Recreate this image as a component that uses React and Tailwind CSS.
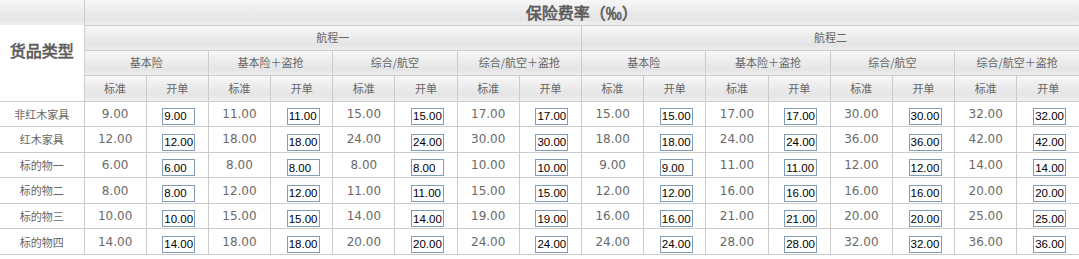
import React from "react";

const groups = ["基本险", "基本险＋盗抢", "综合/航空", "综合/航空＋盗抢"];

const rows = [
  { name: "非红木家具", values: [9, 11, 15, 17, 15, 17, 30, 32] },
  { name: "红木家具", values: [12, 18, 24, 30, 18, 24, 36, 42] },
  { name: "标的物一", values: [6, 8, 8, 10, 9, 11, 12, 14] },
  { name: "标的物二", values: [8, 12, 11, 15, 12, 16, 16, 20] },
  { name: "标的物三", values: [10, 15, 14, 19, 16, 21, 20, 25] },
  { name: "标的物四", values: [14, 18, 20, 24, 24, 28, 32, 36] },
];

const headCell =
  "border-b border-r border-[#cccccc] bg-white bg-[linear-gradient(#f7f7f7,#e9e9e9_55%,#e5e5e5_75%,#efefef)] bg-no-repeat bg-[length:100%_25px] font-normal text-[11px] text-[#666666] h-[25px] p-0";

const boldText =
  "text-[16px] font-bold text-[#555555] [-webkit-text-stroke:0.6px_#555555]";

const cjk = { fontFamily: '"Noto Sans CJK SC", "DejaVu Sans", sans-serif' };

const App = () => {
  return (
    <div className="w-[1079px] bg-white" style={cjk}>
      <table className="w-full table-fixed border-collapse">
        <colgroup>
          <col className="w-[84px]" />
          {Array.from({ length: 16 }).map((_, i) => (
            <col key={i} />
          ))}
        </colgroup>
        <thead>
          <tr>
            <th rowSpan={4} className={`${headCell} ${boldText}`}>
              货品类型
            </th>
            <th
              colSpan={16}
              className={`${headCell} ${boldText} border-r-0 h-[24px]`}
            >
              保险费率（‰）
            </th>
          </tr>
          <tr>
            <th colSpan={8} className={headCell}>
              航程一
            </th>
            <th colSpan={8} className={`${headCell} border-r-0`}>
              航程二
            </th>
          </tr>
          <tr>
            {[0, 1].map((r) =>
              groups.map((g, i) => (
                <th
                  key={`${r}-${i}`}
                  colSpan={2}
                  className={`${headCell} ${r === 1 && i === 3 ? "border-r-0" : ""}`}
                >
                  {g}
                </th>
              ))
            )}
          </tr>
          <tr>
            {Array.from({ length: 8 }).map((_, i) => (
              <React.Fragment key={i}>
                <th className={`${headCell} h-[26px]`}>标准</th>
                <th className={`${headCell} h-[26px] ${i === 7 ? "border-r-0" : ""}`}>
                  开单
                </th>
              </React.Fragment>
            ))}
          </tr>
        </thead>
        <tbody>
          {rows.map((row) => (
            <tr key={row.name} className="h-[25.6px]">
              <td className="border-b border-r border-[#cccccc] text-center text-[11px] text-[#666666] p-0">
                {row.name}
              </td>
              {row.values.map((v, i) => {
                const val = v.toFixed(2);
                return (
                  <React.Fragment key={i}>
                    <td className="border-b border-r border-[#cccccc] text-center text-[12px] text-[#6a6a6a] p-0 font-['DejaVu_Sans',sans-serif]">
                      {val}
                    </td>
                    <td
                      className={`border-b border-[#cccccc] p-0 text-center ${
                        i === 7 ? "" : "border-r"
                      }`}
                    >
                      <input
                        readOnly
                        value={val}
                        className="w-[33px] h-[17px] border border-[#7f9db9] px-[1px] text-[11.5px] leading-[15px] text-black bg-white align-middle ml-[3px] font-['Liberation_Sans',Arial,sans-serif]"
                      />
                    </td>
                  </React.Fragment>
                );
              })}
            </tr>
          ))}
        </tbody>
      </table>
    </div>
  );
};

export default App;
